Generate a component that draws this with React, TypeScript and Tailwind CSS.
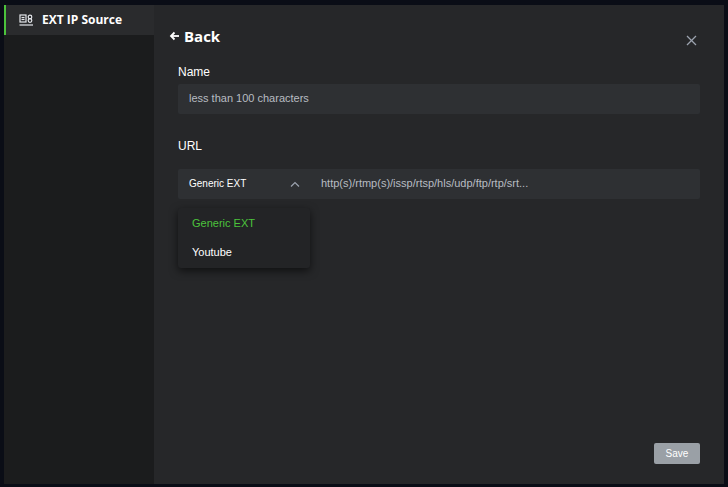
import React from "react";

export default function App() {
  return (
    <div className="w-[728px] h-[487px] bg-[#0a0d16] relative overflow-hidden" style={{ fontFamily: "'Liberation Sans', Arial, sans-serif" }}>
      <div className="absolute left-[4px] top-[5px] w-[720px] h-[479px] flex">
        <div className="w-[150px] bg-[#1b1c1d] flex flex-col">
          <div className="h-[30px] bg-[#2a2b2d] border-l-2 border-[#4cc33c] flex items-center pl-[13px] gap-[8px] text-white text-[12px] font-bold" style={{ fontFamily: "'Open Sans', sans-serif" }}>
            <svg width="15" height="12" viewBox="0 0 15 12" fill="none" stroke="#e5e7eb" strokeWidth="1.2">
              <rect x="1" y="1" width="6" height="7" />
              <line x1="2.5" y1="3.5" x2="5.5" y2="3.5" />
              <line x1="2.5" y1="5.5" x2="5.5" y2="5.5" />
              <circle cx="11" cy="3" r="1.8" />
              <circle cx="11" cy="6.5" r="1.8" />
              <line x1="0.5" y1="11" x2="14" y2="11" />
            </svg>
            <span>EXT IP Source</span>
          </div>
        </div>
        <div className="flex-1 bg-[#262729] relative flex flex-col px-[24px] pt-[20px] pb-[20px]">
          <div className="flex items-center gap-[4px] text-white text-[15px] font-bold -ml-[9px]" style={{ fontFamily: "'Open Sans', sans-serif" }}>
            <svg width="11" height="10" viewBox="0 0 11 10" fill="none" stroke="white" strokeWidth="1.8"><line x1="10" y1="5" x2="2" y2="5" /><polyline points="5.5,1.5 2,5 5.5,8.5" /></svg>
            <span>Back</span>
          </div>
          <svg className="absolute right-[27px] top-[30px]" width="11" height="11" viewBox="0 0 11 11" stroke="#9ca3af" strokeWidth="1.3">
            <line x1="1" y1="1" x2="10" y2="10" /><line x1="10" y1="1" x2="1" y2="10" />
          </svg>
          <div className="mt-[15px] text-white text-[12px]">Name</div>
          <div className="mt-[3px] h-[30px] bg-[#2e3033] rounded-[2px] flex items-center px-[11px] text-[#b8bcc2] text-[11px]">less than 100 characters</div>
          <div className="mt-[23px] text-white text-[12px]">URL</div>
          <div className="mt-[14px] h-[30px] bg-[#2e3033] rounded-[2px] flex items-center text-[11px] relative">
            <div className="w-[132px] flex items-center justify-between pl-[11px] pr-[10px] text-white text-[10px]">
              <span>Generic EXT</span>
              <svg width="10" height="6" viewBox="0 0 10 6" fill="none" stroke="#9ca3af" strokeWidth="1.2"><polyline points="1,5.5 5,1.5 9,5.5" /></svg>
            </div>
            <span className="ml-[11px] text-[#b8bcc2]">http(s)/rtmp(s)/issp/rtsp/hls/udp/ftp/rtp/srt...</span>
            <div className="absolute left-0 top-[39px] w-[132px] h-[60px] bg-[#232426] rounded-[3px] shadow-[0_3px_8px_rgba(0,0,0,0.6)] flex flex-col justify-center gap-[12px] pl-[14px] text-[11px]">
              <span className="text-[#4cc33c]">Generic EXT</span>
              <span className="text-white">Youtube</span>
            </div>
          </div>
          <div className="flex-1" />
          <div className="flex justify-end">
            <div className="w-[46px] h-[21px] bg-[#9aa0a6] rounded-[2px] flex items-center justify-center text-white text-[10px]">Save</div>
          </div>
        </div>
      </div>
    </div>
  );
}
